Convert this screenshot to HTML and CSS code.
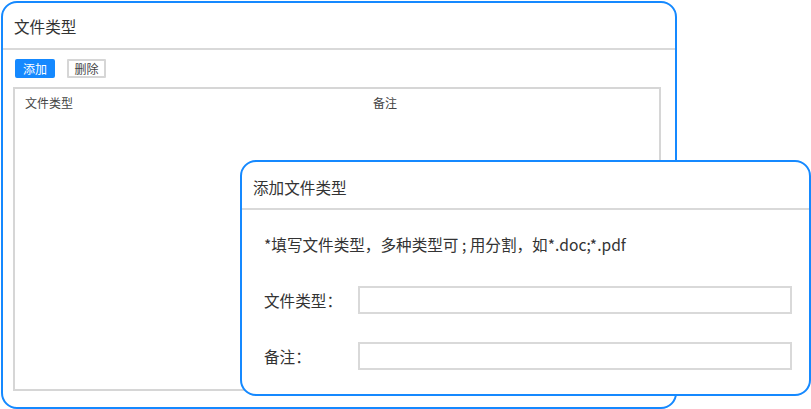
FILE: index.html
```html
<!DOCTYPE html>
<html lang="zh-CN">
<head>
  <meta charset="UTF-8">
  <meta name="viewport" content="width=device-width, initial-scale=1.0">
  <title>文件类型</title>
  <link rel="stylesheet" href="styles.css">
</head>
<body>
  <div class="desktop">
    <div class="window main">
      <div class="win-header">文件类型</div>
      <div class="toolbar">
        <button class="btn btn-primary">添加</button>
        <button class="btn">删除</button>
      </div>
      <div class="grid">
        <div class="grid-head">
          <div class="col col-type">文件类型</div>
          <div class="col">备注</div>
        </div>
      </div>
    </div>

    <div class="window dialog">
      <div class="win-header">添加文件类型</div>
      <div class="dialog-body">
        <p class="hint">*填写文件类型，多种类型可 ; 用分割，如*.doc;*.pdf</p>
        <div class="form-row">
          <label for="ftype">文件类型：</label>
          <input type="text" id="ftype">
        </div>
        <div class="form-row">
          <label for="remark">备注：</label>
          <input type="text" id="remark">
        </div>
      </div>
    </div>
  </div>
</body>
</html>
```

FILE: styles.css
```css
body {
  margin: 0;
  padding: 0;
  background-color: white;
  font-family: "Noto Sans CJK SC", "Noto Sans", sans-serif;
  color: #333;
}

.desktop {
  position: relative;
  width: 811px;
  height: 409px;
}

.window {
  box-sizing: border-box;
  background-color: white;
  border: 2px solid #1589ff;
  border-radius: 16px;
}

.main {
  margin: 1px 0 0 1px;
  width: 676px;
  height: 408px;
  display: flex;
  flex-direction: column;
}

.win-header {
  height: 45px;
  line-height: 47px;
  padding-left: 11px;
  font-size: 15.6px;
  border-bottom: 2px solid #d9d9d9;
}

.toolbar {
  display: flex;
  gap: 12px;
  padding: 9px 0 0 12px;
  height: 19px;
}

.btn {
  box-sizing: border-box;
  height: 19px;
  width: 39px;
  padding: 0;
  font-family: inherit;
  font-size: 12px;
  line-height: 15px;
  color: #444;
  background-color: white;
  border: 2px solid #d6d6d6;
  border-radius: 1px;
}

.btn-primary {
  width: 40px;
  color: white;
  background-color: #1589ff;
  border-color: #1589ff;
  border-radius: 2px;
}

.grid {
  margin: 9px 14px 16px 10px;
  flex: 1;
  border: 2px solid #d6d6d6;
}

.grid-head {
  display: flex;
  font-size: 12px;
  color: #444;
  padding-top: 5px;
}

.col {
  padding-left: 10px;
}

.col-type {
  width: 338px;
}

.dialog {
  position: absolute;
  left: 240px;
  top: 159px;
  width: 571px;
  height: 236px;
}

.dialog .win-header {
  height: 46px;
  line-height: 50px;
}

.dialog-body {
  padding: 0 17px 0 22px;
}

.hint {
  margin: 0;
  padding-top: 23px;
  font-size: 15.6px;
  line-height: 22px;
}

.form-row {
  display: flex;
  align-items: center;
  margin-top: 31px;
}

.form-row + .form-row {
  margin-top: 28px;
}

.form-row label {
  width: 94px;
  font-size: 15.6px;
}

.form-row input {
  flex: 1;
  box-sizing: border-box;
  height: 28px;
  border: 2px solid #d9d9d9;
  outline: none;
}
```
